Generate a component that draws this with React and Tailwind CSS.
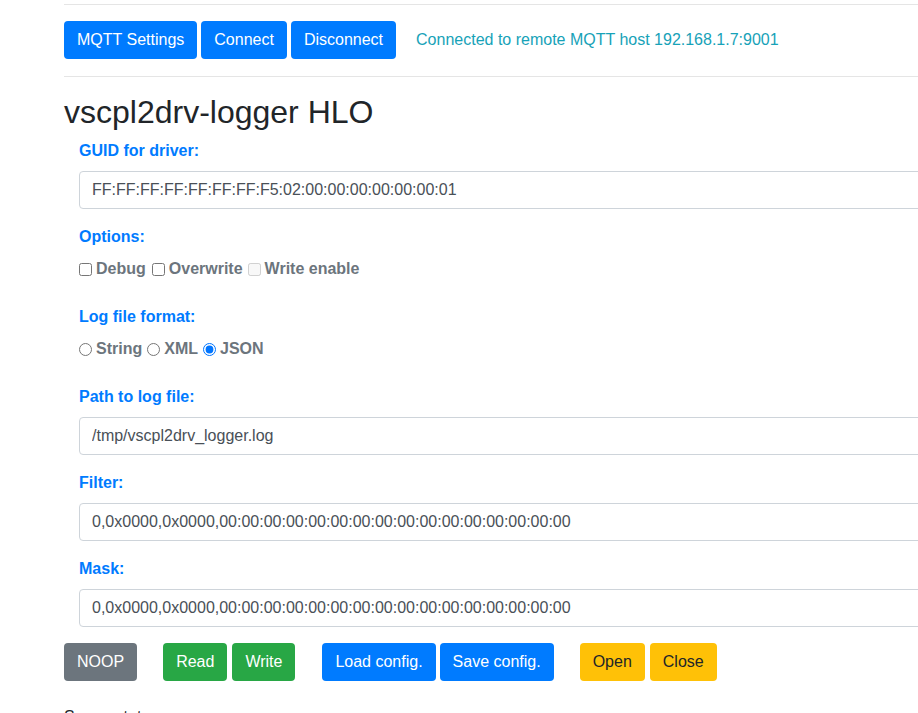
import React, { useState } from 'react';

const btn = 'inline-block rounded-[4px] border border-transparent px-3 py-[6px] text-base leading-6 whitespace-nowrap';
const blue = `${btn} bg-[#007bff] border-[#007bff] text-white`;
const green = `${btn} bg-[#28a745] border-[#28a745] text-white`;
const gray = `${btn} bg-[#6c757d] border-[#6c757d] text-white`;
const yellow = `${btn} bg-[#ffc107] border-[#ffc107] text-[#212529]`;

function Field({ label, value, onChange }) {
  return (
    <div className="mb-4">
      <label className="block mb-2 font-bold text-[#007bff] leading-6">{label}</label>
      <input
        type="text"
        value={value}
        onChange={(e) => onChange(e.target.value)}
        className="block w-full h-[38px] px-3 py-[6px] text-base leading-6 text-[#495057] bg-white border border-[#ced4da] rounded-[4px] outline-none"
      />
    </div>
  );
}

export default function App() {
  const [guid, setGuid] = useState('FF:FF:FF:FF:FF:FF:FF:F5:02:00:00:00:00:00:00:01');
  const [path, setPath] = useState('/tmp/vscpl2drv_logger.log');
  const [filter, setFilter] = useState('0,0x0000,0x0000,00:00:00:00:00:00:00:00:00:00:00:00:00:00:00:00');
  const [mask, setMask] = useState('0,0x0000,0x0000,00:00:00:00:00:00:00:00:00:00:00:00:00:00:00:00');
  const [format, setFormat] = useState('json');

  return (
    <div className="h-screen w-full overflow-hidden bg-white font-['Liberation_Sans',Arial,sans-serif] text-base text-[#212529]">
      <div className="ml-[64px] w-[1110px]">
        <hr className="mt-[4px] mb-4 border-0 border-t border-[#e5e5e5]" />

        <div className="flex items-center">
          <button className={blue}>MQTT Settings</button>
          <button className={`${blue} ml-[4px]`}>Connect</button>
          <button className={`${blue} ml-[4px]`}>Disconnect</button>
          <span className="ml-5 text-[#17a2b8]">Connected to remote MQTT host 192.168.1.7:9001</span>
        </div>

        <hr className="mt-[17px] mb-4 border-0 border-t border-[#e5e5e5]" />

        <h2 className="text-[32px] leading-[1.2] font-normal mb-2">vscpl2drv-logger HLO</h2>

        <div className="px-[15px]">
          <Field label="GUID for driver:" value={guid} onChange={setGuid} />

          <div className="mb-6">
            <label className="block mb-2 font-bold text-[#007bff] leading-6">Options:</label>
            <div className="flex items-center leading-6 font-bold text-[#6c757d]">
              <input type="checkbox" className="w-[13px] h-[13px] mr-[4px]" />
              <span>Debug</span>
              <input type="checkbox" className="w-[13px] h-[13px] ml-[6px] mr-[4px]" />
              <span>Overwrite</span>
              <input type="checkbox" disabled className="w-[13px] h-[13px] ml-[5px] mr-[4px]" />
              <span>Write enable</span>
            </div>
          </div>

          <div className="mb-6">
            <label className="block mb-2 font-bold text-[#007bff] leading-6">Log file format:</label>
            <div className="flex items-center leading-6 font-bold text-[#6c757d]">
              <input type="radio" name="fmt" checked={format === 'string'} onChange={() => setFormat('string')} className="w-[13px] h-[13px] mr-[4px]" />
              <span>String</span>
              <input type="radio" name="fmt" checked={format === 'xml'} onChange={() => setFormat('xml')} className="w-[13px] h-[13px] ml-[5px] mr-[4px]" />
              <span>XML</span>
              <input type="radio" name="fmt" checked={format === 'json'} onChange={() => setFormat('json')} className="w-[13px] h-[13px] ml-[5px] mr-[4px]" />
              <span>JSON</span>
            </div>
          </div>

          <Field label="Path to log file:" value={path} onChange={setPath} />
          <Field label="Filter:" value={filter} onChange={setFilter} />
          <Field label="Mask:" value={mask} onChange={setMask} />
        </div>

        <div className="flex items-center">
          <button className={gray}>NOOP</button>
          <button className={`${green} ml-[26px]`}>Read</button>
          <button className={`${green} ml-[5px]`}>Write</button>
          <button className={`${blue} ml-[27px]`}>Load config.</button>
          <button className={`${blue} ml-[4px]`}>Save config.</button>
          <button className={`${yellow} ml-[26px]`}>Open</button>
          <button className={`${yellow} ml-[5px]`}>Close</button>
        </div>

        <div className="mt-[24px] leading-6">Server status</div>
      </div>
    </div>
  );
}
